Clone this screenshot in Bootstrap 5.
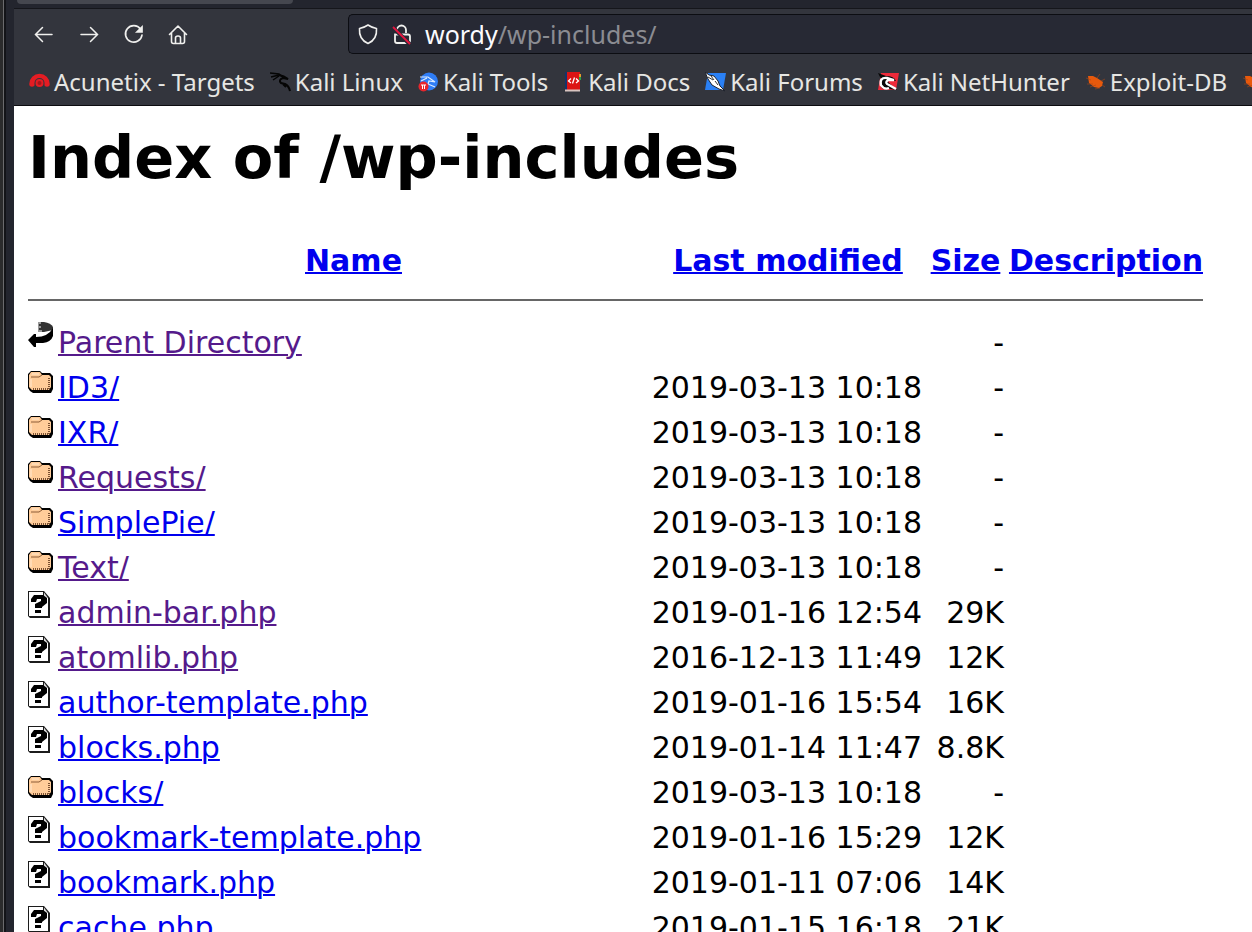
<!DOCTYPE html>
<html lang="en">
<head>
<meta charset="utf-8">
<meta name="viewport" content="width=device-width, initial-scale=1">
<title>Index of /wp-includes</title>
<link rel="stylesheet" href="https://cdn.jsdelivr.net/npm/bootstrap@5.3.0/dist/css/bootstrap.min.css">
<style>
body { background: #23252e; }
.desk-edge { width: 14px; background: linear-gradient(to right, #2b2b2c 0 3px, #6b6b6d 3px 4px, #131418 4px 6px, #23252e 6px); }
.chrome { font-family: "Noto Sans", sans-serif; font-size: 24px; }
.chrome { background: #33353d; color: #e6e6e3; border-bottom: 1px solid #0c0c10; }
.tab-strip { height: 9px; background: #23252e; border-bottom: 1px solid #15161b; }
.tab-end { width: 276px; height: 4px; margin-left: 3px; background: #45474f; border-radius: 0 0 4px 4px; }
.toolbar { height: 50px; padding: 5px 0 5px 18px; }
.tool { width: 24px; height: 24px; color: #f0f0ee; }
.tools { gap: 21px; width: 316px; }
.address { height: 40px; background: #272934; border: 1px solid #0c0d12; border-right: 0; border-radius: 5px 0 0 5px; padding-left: 8px; gap: 12px; font-size: 25px; }
.address svg { width: 22px; height: 24px; }
.address a { color: #8b8c92; line-height: 36px; }
.address b { color: #fbfbfe; font-weight: 400; }
.bookmarks { height: 46px; padding-left: 15px; gap: 15px; }
.bookmarks a { color: inherit; gap: 4px; line-height: 36px; }
.bookmarks svg { width: 21px; height: 21px; flex: none; }
.listing { font-family: "DejaVu Sans", sans-serif; font-size: 30px; line-height: 45px; color: #000; padding: 17px 14px 0; }
.listing h1 { font-size: 59px; line-height: 70px; font-weight: 700; margin-bottom: 45px; }
.listing a { color: #0000ee; text-decoration-thickness: 2px; }
.listing a.seen { color: #551a8b; }
.listing th, .listing td { padding: 0; white-space: nowrap; }
.c-icon { width: 30px; } .c-name { width: 591px; } .c-date { width: 278px; } .c-size { width: 77px; } .c-desc { width: 199px; }
.listing td:nth-child(3) { padding-right: 5px; }
.listing td svg { width: 26px; height: 30px; }
.listing hr { margin: 16px 0 19px; border-top: 2px solid #666; opacity: 1; }
</style>
</head>
<body>
<svg width="0" height="0" class="position-absolute" aria-hidden="true">
  <symbol id="back" viewBox="0 0 26 30"><path d="M10 2h6q7 1 9 5v3l-9 2h-6z" fill="#333"/><path d="M10 2h3v2h-2v2h2v2h-2v2h3v2h-4z" fill="#999"/><path d="M25 8v8q-2 6-10 7H8v4H6l-6-7 6-6h2v3q12 0 17-9z" fill="#000"/></symbol>
  <symbol id="folder" viewBox="0 0 26 30"><path d="M3 6h9l2 2h8l3 3v13l-2 4H5l-3-2-2-3V9z" fill="#000"/><path d="M3 7h9l2 3h7l2 2v10l-2 3H4l-3-3V10z" fill="#ffcc99"/><path d="M3 12h8l3-2" fill="none" stroke="#8d5c36"/><path d="M4 9h7M3 14v8" stroke="#ffe9d2" fill="none"/><path d="M21 13v11M5 24h16" fill="none" stroke="#7c5233" stroke-width="2" stroke-dasharray="1 1"/></symbol>
  <symbol id="unknown" viewBox="0 0 26 30"><path d="M0 1h16l6 7v20H2l-2-2z" fill="#1c1c1c"/><path d="M1 2h14v6h5v18H1z" fill="#fff"/><path d="M16 2.500L20 8h-4z" fill="#ddd"/><path d="M3 9l3-4h9l4 3v5l-5 4v1H7v-4l6-3V9H9l-1 3H3z" fill="#000"/><path d="M7 20h6v3H7z" fill="#000"/></symbol>
  <symbol id="bug" viewBox="0 0 21 21"><path d="M3 4l5 0 4 2 6 4-1 4-3 2-5-1-5-4z" fill="#e8590c"/><path d="M1 6l5 2M2 12l6 0M5 15l6-2M10 17l5-1M12 6l3-4M16 9l4-2M17 13l3 2" stroke="#a84717" stroke-opacity=".6" fill="none"/></symbol>
</svg>
<div class="d-flex vh-100 overflow-hidden">
<div class="desk-edge flex-shrink-0"></div>
<div class="flex-grow-1 bg-white overflow-hidden">
<header class="chrome">
  <div class="tab-strip"><div class="tab-end"></div></div>
  <div class="toolbar d-flex align-items-center">
    <div class="tools d-flex flex-shrink-0 align-items-center">
      <button class="tool btn p-0 border-0 d-flex" aria-label="Back"><svg viewBox="0 0 24 24" fill="none" stroke="currentColor" stroke-width="1.500" stroke-linecap="round"><path d="M20 12.500H4M10.500 5.500l-7 7 7 7"/></svg></button>
      <button class="tool btn p-0 border-0 d-flex" aria-label="Forward"><svg viewBox="0 0 24 24" fill="none" stroke="currentColor" stroke-width="1.500" stroke-linecap="round"><path d="M4 12.500h16M13.500 5.500l7 7-7 7"/></svg></button>
      <button class="tool btn p-0 border-0 d-flex" aria-label="Reload"><svg viewBox="0 0 24 24" fill="none" stroke="currentColor" stroke-width="1.700" stroke-linecap="round"><path d="M18.500 7A8.300 8.300 0 1 0 20 13"/><path d="M20 5v5h-5z" fill="currentColor"/></svg></button>
      <button class="tool btn p-0 border-0 d-flex" aria-label="Home"><svg viewBox="0 0 24 24" fill="none" stroke="currentColor" stroke-width="1.600" stroke-linecap="round" stroke-linejoin="round"><path d="M2.500 12.500l8.500-8.500 8.500 8.500M4.500 11v8.500q0 2 2 2h9q2 0 2-2V11M8.500 21v-5q0-2 2.500-2t2.500 2v5"/></svg></button>
    </div>
    <div class="address d-flex flex-grow-1 align-items-center">
      <svg viewBox="0 0 22 24" fill="none" stroke="#f0f0ee" stroke-width="1.600" stroke-linejoin="round"><path d="M11 3c3 2 5 3 8.500 3.500C20 13 18 18.500 11 21.500 4 18.500 2 13 2.500 6.500 6 6 8 5 11 3z"/></svg>
      <svg viewBox="0 0 22 24" fill="none" stroke="#f0f0ee" stroke-width="1.800"><path d="M6 11V8a4.500 4.500 0 0 1 9 0v3M4 12.500h13q2 0 2 2V19q0 2-2 2H6q-2 0-2-2z"/><path d="M1 4.500l18 18" stroke="#272934" stroke-width="4"/><path d="M2 5l17 17" stroke="#e6143f" stroke-width="1.800"/></svg>
      <a href="#" class="text-decoration-none"><b>wordy</b>/wp-includes/</a>
    </div>
  </div>
  <nav class="bookmarks d-flex align-items-center text-nowrap overflow-hidden" aria-label="Bookmarks">
    <a href="#" class="d-flex align-items-center text-decoration-none"><svg viewBox="0 0 21 21"><path d="M3 14A7.500 7.500 0 1 1 18 14" transform="translate(0 -2)" fill="none" stroke="#e51c23" stroke-width="5.500" stroke-linecap="round"/><circle cx="10.500" cy="11" r="5" fill="#33353d"/><circle cx="10.500" cy="11" r="4" fill="#e51c23"/><circle cx="10.500" cy="11" r="2" fill="#a5161c"/></svg>Acunetix - Targets</a>
    <a href="#" class="d-flex align-items-center text-decoration-none"><svg viewBox="0 0 21 21" fill="none" stroke="#050505"><path d="M0 1l9 1 5 4M1 5l8-2M3 8l6-4" stroke-width="1.500"/><path d="M9 3q5 1 9 4l-5-1q-5 2-2 5l4 1q4 2 5 7M13 12l3 3" stroke-width="2"/></svg>Kali Linux</a>
    <a href="#" class="d-flex align-items-center text-decoration-none"><svg viewBox="0 0 21 21"><circle cx="11" cy="9.500" r="9" fill="#2f7df6"/><path d="M2 5l8 0 7 5-6-1-1 3 7 3M3 9l6-3" fill="none" stroke="#dcecff" stroke-width="1.200"/><circle cx="5.500" cy="14.500" r="5" fill="#e8262c"/><path d="M3 13h5M4.500 13v4M6.500 13v4" stroke="#fff" fill="none"/></svg>Kali Tools</a>
    <a href="#" class="d-flex align-items-center text-decoration-none"><svg viewBox="0 0 21 21"><path d="M2 0h15v19H2z" fill="#dc1414"/><path d="M2 0h2v18H2z" fill="#16336b"/><path d="M2 17.500h15v2H2z" fill="#d8c4c0"/><path d="M16 2h2v3h-2z" fill="#e7992b"/><path d="M16 5h2v3h-2z" fill="#2a9e4a"/><path d="M8 6.500L5.500 9 8 11M13 6.500L15.500 9 13 11M11.500 5.500l-2 6" fill="none" stroke="#fff" stroke-width="1.300"/></svg>Kali Docs</a>
    <a href="#" class="d-flex align-items-center text-decoration-none"><svg viewBox="0 0 21 21"><path d="M3 1h18l-3 17H0z" fill="#2a80f5"/><path d="M0 0l4 3 5 1 4 5 2 5 5 5-6-2-7-4-4-6z" fill="#fff" stroke="#20242e"/><path d="M3 5l5 3M6 4l3 4M10 9l3 4" stroke="#333"/></svg>Kali Forums</a>
    <a href="#" class="d-flex align-items-center text-decoration-none"><svg viewBox="0 0 21 21"><path d="M3 1h18l-3 17H0z" fill="#ee2a3a"/><path d="M0 1l8 3q8 0 10 5l-6-1q-3 1-1 3l8 7-8-1q-8 2-9-5l1-5z" fill="#080808"/><path d="M3 14Q1 5 9 6l7 2-6 0q-4 3 1 5l7 4M3 13q3 5 8 3" fill="none" stroke="#fff" stroke-width="2.300"/></svg>Kali NetHunter</a>
    <a href="#" class="d-flex align-items-center text-decoration-none"><svg><use href="#bug"/></svg>Exploit-DB</a>
    <a href="#" class="d-flex align-items-center" aria-label="Next bookmark"><svg><use href="#bug"/></svg></a>
  </nav>
</header>
<main class="listing">
  <h1>Index of /wp-includes</h1>
  <table>
    <colgroup><col class="c-icon"><col class="c-name"><col class="c-date"><col class="c-size"><col class="c-desc"></colgroup>
    <thead>
      <tr class="text-center"><th></th><th><a href="#">Name</a></th><th><a href="#">Last modified</a></th><th><a href="#">Size</a></th><th class="text-end"><a href="#">Description</a></th></tr>
      <tr><td colspan="5"><hr></td></tr>
    </thead>
    <tbody>
      <tr><td class="align-top"><svg class="d-block"><use href="#back"/></svg></td><td><a href="#" class="seen">Parent Directory</a></td><td></td><td class="text-end">-</td><td></td></tr>
      <tr><td class="align-top"><svg class="d-block"><use href="#folder"/></svg></td><td><a href="#">ID3/</a></td><td class="text-end">2019-03-13 10:18</td><td class="text-end">-</td><td></td></tr>
      <tr><td class="align-top"><svg class="d-block"><use href="#folder"/></svg></td><td><a href="#">IXR/</a></td><td class="text-end">2019-03-13 10:18</td><td class="text-end">-</td><td></td></tr>
      <tr><td class="align-top"><svg class="d-block"><use href="#folder"/></svg></td><td><a href="#" class="seen">Requests/</a></td><td class="text-end">2019-03-13 10:18</td><td class="text-end">-</td><td></td></tr>
      <tr><td class="align-top"><svg class="d-block"><use href="#folder"/></svg></td><td><a href="#">SimplePie/</a></td><td class="text-end">2019-03-13 10:18</td><td class="text-end">-</td><td></td></tr>
      <tr><td class="align-top"><svg class="d-block"><use href="#folder"/></svg></td><td><a href="#" class="seen">Text/</a></td><td class="text-end">2019-03-13 10:18</td><td class="text-end">-</td><td></td></tr>
      <tr><td class="align-top"><svg class="d-block"><use href="#unknown"/></svg></td><td><a href="#" class="seen">admin-bar.php</a></td><td class="text-end">2019-01-16 12:54</td><td class="text-end">29K</td><td></td></tr>
      <tr><td class="align-top"><svg class="d-block"><use href="#unknown"/></svg></td><td><a href="#" class="seen">atomlib.php</a></td><td class="text-end">2016-12-13 11:49</td><td class="text-end">12K</td><td></td></tr>
      <tr><td class="align-top"><svg class="d-block"><use href="#unknown"/></svg></td><td><a href="#">author-template.php</a></td><td class="text-end">2019-01-16 15:54</td><td class="text-end">16K</td><td></td></tr>
      <tr><td class="align-top"><svg class="d-block"><use href="#unknown"/></svg></td><td><a href="#">blocks.php</a></td><td class="text-end">2019-01-14 11:47</td><td class="text-end">8.8K</td><td></td></tr>
      <tr><td class="align-top"><svg class="d-block"><use href="#folder"/></svg></td><td><a href="#">blocks/</a></td><td class="text-end">2019-03-13 10:18</td><td class="text-end">-</td><td></td></tr>
      <tr><td class="align-top"><svg class="d-block"><use href="#unknown"/></svg></td><td><a href="#">bookmark-template.php</a></td><td class="text-end">2019-01-16 15:29</td><td class="text-end">12K</td><td></td></tr>
      <tr><td class="align-top"><svg class="d-block"><use href="#unknown"/></svg></td><td><a href="#">bookmark.php</a></td><td class="text-end">2019-01-11 07:06</td><td class="text-end">14K</td><td></td></tr>
      <tr><td class="align-top"><svg class="d-block"><use href="#unknown"/></svg></td><td><a href="#">cache.php</a></td><td class="text-end">2019-01-15 16:18</td><td class="text-end">21K</td><td></td></tr>
    </tbody>
  </table>
</main>
</div>
</div>
<script src="https://cdn.jsdelivr.net/npm/bootstrap@5.3.0/dist/js/bootstrap.bundle.min.js"></script>
</body>
</html>
